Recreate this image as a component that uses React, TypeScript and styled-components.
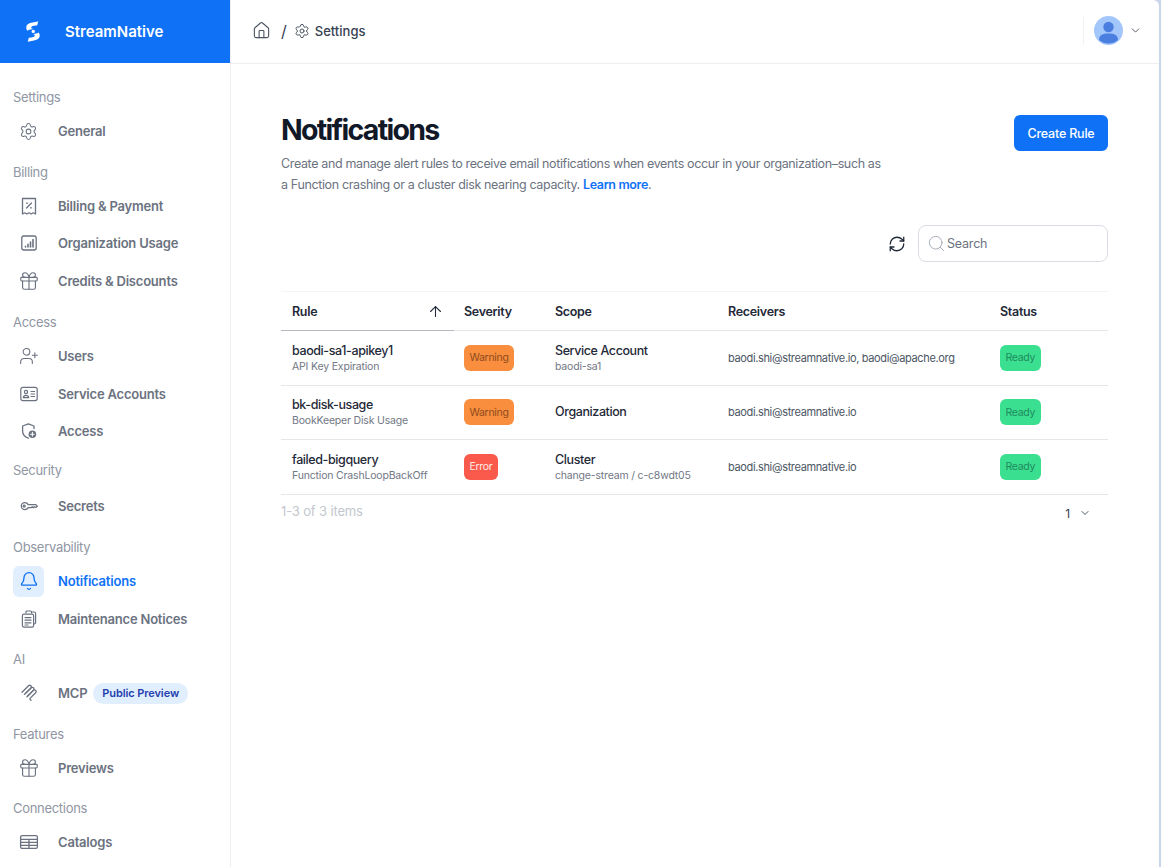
import React from "react";
import styled, { createGlobalStyle } from "styled-components";
import {
	ArrowUp,
	Bell,
	ChevronDown,
	Gift,
	House,
	RefreshCw,
	Search,
	Settings,
	UserPlus,
} from "lucide-react";

const GlobalStyle = createGlobalStyle`
	html, body {
		margin: 0;
		padding: 0;
		height: 100%;
		background: #c9d6ea;
		font-family: Inter, "Liberation Sans", sans-serif;
		overflow: hidden;
	}
	* { box-sizing: border-box; }
`;

const ReceiptIcon = () => (
	<svg width='20' height='20' viewBox='0 0 20 20' fill='none' stroke='currentColor' strokeWidth='1.3' strokeLinejoin='round' strokeLinecap='round'>
		<path d='M3.5 2.5h13v15.5l-2.2-1.2-2.1 1.2-2.2-1.2-2.2 1.2-2.1-1.2-2.2 1.2z' />
		<path d='M7.5 12l5-5M7.6 7.2h.9M11.5 11.8h.9' />
	</svg>
);

const UsageIcon = () => (
	<svg width='20' height='20' viewBox='0 0 20 20' fill='none' stroke='currentColor' strokeWidth='1.3' strokeLinecap='round'>
		<rect x='2.8' y='3' width='14.4' height='14' rx='2' />
		<path d='M6.5 14v-.6M9 14v-2.6M11.5 14V9M14 14V6.6' strokeWidth='1.6' />
	</svg>
);

const IdCardIcon = () => (
	<svg width='20' height='20' viewBox='0 0 20 20' fill='none' stroke='currentColor' strokeWidth='1.2' strokeLinecap='round'>
		<rect x='1.8' y='3.4' width='16.4' height='13.2' rx='2' />
		<circle cx='7' cy='8' r='1.6' />
		<path d='M4.4 13.6c.2-3 5-3 5.2 0zM12 7.5h3.6M12 10h3.6M12 12.5h3.6' />
	</svg>
);

const ShieldPlusIcon = () => (
	<svg width='20' height='20' viewBox='0 0 20 20' fill='none' stroke='currentColor' strokeWidth='1.3' strokeLinecap='round' strokeLinejoin='round'>
		<path d='M9.4 17.2C6 16 3.6 13.6 3.6 10V5l5.8-2.2L15 5v2.5' />
		<circle cx='13.4' cy='13.2' r='3.8' fill='currentColor' stroke='none' />
		<path d='M13.4 11.4v3.6M11.6 13.2h3.6' stroke='#fff' strokeWidth='1.1' />
	</svg>
);

const KeyIcon = () => (
	<svg width='20' height='20' viewBox='0 0 20 20' fill='none' stroke='currentColor' strokeWidth='1.3' strokeLinecap='round' strokeLinejoin='round'>
		<path d='M5.8 6.6c1.6 0 2.8.8 3.4 2h7.6l1.6 1.5-1.5 1.4-1.2-.7-1.2.8-1.2-.8-1.2.8H9.2c-.6 1.2-1.8 2-3.4 2a3.5 3.5 0 0 1 0-7z' />
		<circle cx='5.2' cy='10.1' r='1' />
	</svg>
);

const McpIcon = () => (
	<svg width='20' height='20' viewBox='0 0 20 20' fill='none' stroke='currentColor' strokeWidth='1.3' strokeLinecap='round' strokeLinejoin='round'>
		<path d='M3 9.2l6.6-6.4a1.6 1.6 0 0 1 2.3 2.3L6.5 10.5' />
		<path d='M5.4 11.4l6.8-6.6a1.6 1.6 0 0 1 2.3 2.3L8.4 13.2' />
		<path d='M8 13.8l6.4-6.4a1.6 1.6 0 0 1 2.3 2.3l-5.5 5.4a1 1 0 0 0 0 1.4l.9.9' />
	</svg>
);

const NoticesIcon = () => (
	<svg width='20' height='20' viewBox='0 0 20 20' fill='none' stroke='currentColor' strokeWidth='1.2' strokeLinecap='round' strokeLinejoin='round'>
		<path d='M7 3.8V3a1 1 0 0 1 1-1h3.5a1 1 0 0 1 1 1v.8' />
		<path d='M12.6 3h2.6a1.4 1.4 0 0 1 1.4 1.4v9.2a1.4 1.4 0 0 1-1.4 1.4' />
		<rect x='3.4' y='5.2' width='11.2' height='13' rx='1.6' />
		<path d='M6 8.6h6M6 11.2h6M6 13.8h6M6 16h3' />
	</svg>
);

const CatalogIcon = () => (
	<svg width='20' height='20' viewBox='0 0 20 20' fill='none' stroke='currentColor' strokeWidth='1.3' strokeLinecap='round'>
		<rect x='1.6' y='3.6' width='16.8' height='12.8' rx='1.6' />
		<path d='M1.6 7.4h16.8M1.6 10.4h16.8M1.6 13.4h16.8M10 7.4v9' />
	</svg>
);

const LogoMark = () => (
	<svg width='14' height='21' viewBox='0 0 16 24' fill='#fff'>
		<path d='M14 0.2l-1.2 4.6c-2.6.4-6.4.7-6.8 2.4C5.7 8.4 7 9 8.6 9.2 6.4 9.4 3 9.9 1.6 11 .4 9.6 0 8 .5 6 1.6 1.6 9.4 1.6 14 .2z' />
		<circle cx='8.3' cy='11.9' r='1.9' />
		<path d='M2 23.8l1.2-4.6c2.6-.4 6.4-.7 6.8-2.4.3-1.2-1-1.8-2.6-2 2.2-.2 5.6-.7 7-1.8 1.2 1.4 1.6 3 1.1 5C14.4 22.4 6.6 22.4 2 23.8z' />
	</svg>
);

const Avatar = () => (
	<svg width='29' height='29' viewBox='0 0 29 29'>
		<circle cx='14.5' cy='14.5' r='14.5' fill='#a3c6fb' />
		<circle cx='14.5' cy='11' r='5.2' fill='#4a7fe0' />
		<path d='M5 24c0-5 3.5-6.6 9.5-6.6S24 19 24 24a14.5 14.5 0 0 1-19 0z' fill='#4a7fe0' />
	</svg>
);

const navSections = [
	{ title: "Settings", items: [{ label: "General", icon: <Settings size={19} strokeWidth={1.3} /> }] },
	{
		title: "Billing",
		after: "15.5px",
		items: [
			{ label: "Billing & Payment", icon: <ReceiptIcon /> },
			{ label: "Organization Usage", icon: <UsageIcon /> },
			{ label: "Credits & Discounts", icon: <Gift size={22} strokeWidth={1.25} /> },
		],
	},
	{
		title: "Access",
		after: "12.5px",
		items: [
			{ label: "Users", icon: <UserPlus size={20} strokeWidth={1.3} /> },
			{ label: "Service Accounts", icon: <IdCardIcon /> },
			{ label: "Access", icon: <ShieldPlusIcon /> },
		],
	},
	{ title: "Security", gap: "10px", after: "15.5px", items: [{ label: "Secrets", icon: <KeyIcon /> }] },
	{
		title: "Observability",
		items: [
			{ label: "Notifications", icon: <Bell size={20} strokeWidth={1.6} />, active: true },
			{ label: "Maintenance Notices", icon: <NoticesIcon /> },
		],
	},
	{ title: "AI", items: [{ label: "MCP", icon: <McpIcon />, badge: "Public Preview" }] },
	{ title: "Features", items: [{ label: "Previews", icon: <Gift size={22} strokeWidth={1.25} /> }] },
	{ title: "Connections", items: [{ label: "Catalogs", icon: <CatalogIcon /> }] },
];

const rules = [
	{
		name: "baodi-sa1-apikey1",
		type: "API Key Expiration",
		severity: "Warning",
		scope: "Service Account",
		scopeSub: "baodi-sa1",
		receivers: "baodi.shi@streamnative.io, baodi@apache.org",
	},
	{
		name: "bk-disk-usage",
		type: "BookKeeper Disk Usage",
		severity: "Warning",
		scope: "Organization",
		scopeSub: "",
		receivers: "baodi.shi@streamnative.io",
	},
	{
		name: "failed-bigquery",
		type: "Function CrashLoopBackOff",
		severity: "Error",
		scope: "Cluster",
		scopeSub: "change-stream / c-c8wdt05",
		receivers: "baodi.shi@streamnative.io",
	},
];

const App = () => {
	return (
		<Container>
			<GlobalStyle />
			<Sidebar>
				<Brand>
					<LogoMark />
					<BrandName>StreamNative</BrandName>
				</Brand>
				<Nav>
					{navSections.map((section: any) => (
						<NavSection key={section.title} $after={section.after}>
							<SectionTitle $gap={section.gap}>{section.title}</SectionTitle>
							{section.items.map((item: any) => (
								<NavItem key={item.label}>
									<IconBox $active={item.active}>{item.icon}</IconBox>
									<NavLabel $active={item.active}>{item.label}</NavLabel>
									{item.badge && <PreviewBadge>{item.badge}</PreviewBadge>}
								</NavItem>
							))}
						</NavSection>
					))}
				</Nav>
			</Sidebar>

			<Wrapper>
				<TopBar>
					<Crumbs>
						<House size={19} strokeWidth={1.4} />
						<Slash>/</Slash>
						<Settings size={16} strokeWidth={1.5} />
						<CrumbText>Settings</CrumbText>
					</Crumbs>
					<UserMenu>
						<Avatar />
						<ChevronDown size={13} strokeWidth={1.7} />
					</UserMenu>
				</TopBar>

				<Content>
					<TitleRow>
						<div>
							<Title>Notifications</Title>
							<Description>
								Create and manage alert rules to receive email notifications when events occur in your organization–such as
								a Function crashing or a cluster disk nearing capacity. <LearnMore>Learn more</LearnMore>.
							</Description>
						</div>
						<CreateButton>Create Rule</CreateButton>
					</TitleRow>

					<Toolbar>
						<RefreshButton>
							<RefreshCw size={18} strokeWidth={1.7} />
						</RefreshButton>
						<SearchBox>
							<Search size={19} strokeWidth={1.1} />
							<span>Search</span>
						</SearchBox>
					</Toolbar>

					<RulesTable>
						<thead>
							<tr>
								<SortHead $w='173px'>
									<SortInner>
										Rule
										<ArrowUp size={17} strokeWidth={1.5} />
									</SortInner>
								</SortHead>
								<Head $w='91px'>Severity</Head>
								<Head $w='173px'>Scope</Head>
								<Head $w='272px'>Receivers</Head>
								<Head>Status</Head>
							</tr>
						</thead>
						<tbody>
							{rules.map((rule) => (
								<tr key={rule.name}>
									<Cell>
										<Primary>{rule.name}</Primary>
										<Secondary>{rule.type}</Secondary>
									</Cell>
									<Cell>
										<Tag $kind={rule.severity}>{rule.severity}</Tag>
									</Cell>
									<Cell>
										<Primary>{rule.scope}</Primary>
										{rule.scopeSub && <Secondary>{rule.scopeSub}</Secondary>}
									</Cell>
									<Cell>
										<Receivers>{rule.receivers}</Receivers>
									</Cell>
									<Cell>
										<Tag $kind='Ready'>Ready</Tag>
									</Cell>
								</tr>
							))}
						</tbody>
					</RulesTable>

					<TableFooter>
						<span>1-3 of 3 items</span>
						<Pager>
							1
							<ChevronDown size={12} strokeWidth={1.8} />
						</Pager>
					</TableFooter>
				</Content>
			</Wrapper>
		</Container>
	);
};

export default App;

const tagColors: Record<string, { bg: string; fg: string }> = {
	Warning: { bg: "#f98f3e", fg: "#8f4a1d" },
	Error: { bg: "#f95a4b", fg: "#fde9e5" },
	Ready: { bg: "#3ae08f", fg: "#1f8a5f" },
};

const Container = styled.div`
	width: 1159px;
	height: 867px;
	display: flex;
	overflow: hidden;
	background-color: white;
	border-top-right-radius: 6px;
`;

const Sidebar = styled.div`
	width: 231px;
	flex-shrink: 0;
	border-right: 1px solid #eceef2;
`;

const Brand = styled.div`
	height: 63px;
	background-color: #0f72f6;
	display: flex;
	align-items: center;
	padding-left: 26px;
	gap: 25px;
`;

const BrandName = styled.div`
	color: white;
	font-size: 15px;
	font-weight: 600;
`;

const Nav = styled.div`
	padding: 24px 13px 0;
`;

const NavSection = styled.div<{ $after?: string }>`
	margin-bottom: ${(props) => props.$after || "14.5px"};
`;

const SectionTitle = styled.div<{ $gap?: string }>`
	height: 20px;
	line-height: 20px;
	margin-bottom: ${(props) => props.$gap || "8px"};
	font-size: 13px;
	letter-spacing: -0.3px;
	color: #9096a3;
`;

const NavItem = styled.div`
	height: 32px;
	display: flex;
	align-items: center;
	margin-bottom: 5.5px;
	&:last-child {
		margin-bottom: 0;
	}
`;

const IconBox = styled.div<{ $active?: boolean }>`
	width: 31px;
	height: 31px;
	border-radius: 6px;
	display: flex;
	align-items: center;
	justify-content: center;
	margin-right: 14px;
	color: ${(props) => (props.$active ? "#0f72f6" : "#6b7280")};
	background-color: ${(props) => (props.$active ? "#e1eefe" : "transparent")};
`;

const NavLabel = styled.div<{ $active?: boolean }>`
	font-size: 13px;
	letter-spacing: -0.2px;
	font-weight: 600;
	color: ${(props) => (props.$active ? "#0f72f6" : "#6b7280")};
`;

const PreviewBadge = styled.div`
	margin-left: 6px;
	height: 21px;
	line-height: 21px;
	padding: 0 9px;
	border-radius: 11px;
	background-color: #e1eefe;
	color: #1e40af;
	font-size: 11px;
	letter-spacing: -0.1px;
	font-weight: 600;
`;

const Wrapper = styled.div`
	flex: 1;
	min-width: 0;
	display: flex;
	flex-direction: column;
`;

const TopBar = styled.div`
	height: 64px;
	flex-shrink: 0;
	border-bottom: 1px solid #eceef2;
	display: flex;
	align-items: center;
	justify-content: space-between;
	padding: 0 17px 2px 21px;
`;

const Crumbs = styled.div`
	display: flex;
	align-items: center;
	color: #4b5563;
`;

const Slash = styled.span`
	margin: 0 7px 0 10px;
	font-size: 16px;
	color: #374151;
`;

const CrumbText = styled.span`
	margin-left: 5px;
	font-size: 13px;
	font-weight: 500;
	color: #374151;
`;

const UserMenu = styled.div`
	height: 28px;
	display: flex;
	align-items: center;
	gap: 6px;
	padding-left: 10px;
	border-left: 1px solid #f1f2f5;
	color: #4b5563;
`;

const Content = styled.div`
	flex: 1;
	padding: 50px 51px 0 50px;
`;

const TitleRow = styled.div`
	display: flex;
	justify-content: space-between;
	align-items: flex-start;
`;

const Title = styled.div`
	font-size: 28.5px;
	line-height: 32px;
	font-weight: 700;
	letter-spacing: -1.7px;
	color: #111827;
`;

const Description = styled.div`
	width: 604px;
	margin-top: 7px;
	font-size: 12.5px;
	letter-spacing: -0.365px;
	line-height: 21px;
	color: #6b7280;
`;

const LearnMore = styled.span`
	font-weight: 600;
	color: #0f72f6;
`;

const CreateButton = styled.div`
	margin-top: 1px;
	width: 94px;
	height: 36px;
	border-radius: 6px;
	background-color: #0f72f6;
	color: white;
	font-size: 12.5px;
	letter-spacing: -0.2px;
	font-weight: 500;
	display: flex;
	align-items: center;
	justify-content: center;
`;

const Toolbar = styled.div`
	display: flex;
	justify-content: flex-end;
	align-items: center;
	margin-top: 30px;
	gap: 12px;
`;

const RefreshButton = styled.div`
	color: #1f2937;
	display: flex;
`;

const SearchBox = styled.div`
	width: 190px;
	height: 37px;
	border: 1px solid #d9dde3;
	border-radius: 8px;
	display: flex;
	align-items: center;
	padding-left: 8px;
	gap: 1px;
	color: #9ca3af;
	span {
		font-size: 12.5px;
		letter-spacing: -0.2px;
		color: #6b7280;
	}
`;

const RulesTable = styled.table`
	width: 100%;
	margin-top: 29px;
	border-collapse: collapse;
	table-layout: fixed;
	border-top: 1px solid #f3f4f6;
`;

const Head = styled.th<{ $w?: string }>`
	width: ${(props) => props.$w || "auto"};
	height: 39px;
	padding: 0 10px;
	text-align: left;
	font-size: 12.5px;
	letter-spacing: -0.3px;
	font-weight: 600;
	color: #1f2937;
	border-bottom: 1px solid #e5e7eb;
`;

const SortHead = styled(Head)`
	padding-left: 11px;
	border-bottom: 1px solid #b4b8bf;
`;

const SortInner = styled.div`
	display: flex;
	justify-content: space-between;
	align-items: center;
`;

const Cell = styled.td`
	height: 54.5px;
	padding: 0 10px;
	border-bottom: 1px solid #e5e7eb;
	&:first-child {
		padding-left: 11px;
	}
`;

const Primary = styled.div`
	font-size: 12.5px;
	letter-spacing: -0.4px;
	font-weight: 500;
	line-height: 16px;
	color: #1f2937;
`;

const Secondary = styled.div`
	font-size: 10.5px;
	letter-spacing: -0.18px;
	line-height: 15px;
	margin-bottom: -1px;
	color: #717784;
`;

const Receivers = styled.div`
	font-size: 11px;
	letter-spacing: -0.36px;
	white-space: nowrap;
	color: #4b5563;
`;

const Tag = styled.span<{ $kind: string }>`
	display: inline-flex;
	align-items: center;
	height: 26px;
	padding: 0 5.5px;
	border-radius: 6px;
	font-size: 10.5px;
	letter-spacing: -0.3px;
	font-weight: 400;
	background-color: ${(props) => tagColors[props.$kind].bg};
	color: ${(props) => tagColors[props.$kind].fg};
`;

const TableFooter = styled.div`
	display: flex;
	justify-content: space-between;
	align-items: center;
	height: 33px;
	font-size: 13px;
	letter-spacing: -0.15px;
	color: #c3c7ce;
`;

const Pager = styled.div`
	display: flex;
	align-items: center;
	gap: 9px;
	margin-right: 17px;
	padding-top: 4px;
	font-size: 12px;
	color: #374151;
`;
